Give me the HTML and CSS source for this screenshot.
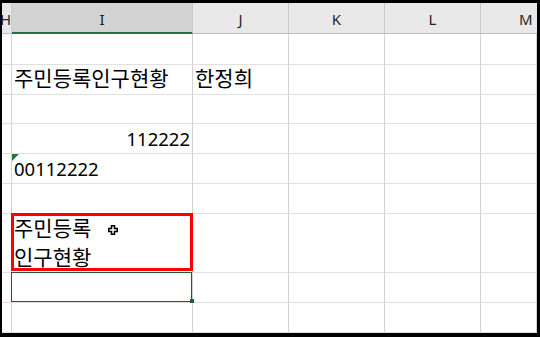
FILE: index.html
```html
<!DOCTYPE html>
<html lang="ko">
<head>
<meta charset="utf-8">
<title>Sheet</title>
<link rel="stylesheet" href="styles.css">
</head>
<body>
<div class="frame">
  <div class="sheet">
    <div class="hd stub">H</div>
    <div class="hd sel">I</div>
    <div class="hd">J</div>
    <div class="hd">K</div>
    <div class="hd">L</div>
    <div class="hd last">M</div>

    <div class="c"></div><div class="c"></div><div class="c"></div><div class="c"></div><div class="c"></div><div class="c"></div>

    <div class="c"></div>
    <div class="c ko">주민등록인구현황</div>
    <div class="c ko">한정희</div>
    <div class="c"></div><div class="c"></div><div class="c"></div>

    <div class="c"></div><div class="c"></div><div class="c"></div><div class="c"></div><div class="c"></div><div class="c"></div>

    <div class="c"></div>
    <div class="c num right">112222</div>
    <div class="c"></div><div class="c"></div><div class="c"></div><div class="c"></div>

    <div class="c"></div>
    <div class="c num flag">00112222</div>
    <div class="c"></div><div class="c"></div><div class="c"></div><div class="c"></div>

    <div class="c"></div><div class="c"></div><div class="c"></div><div class="c"></div><div class="c"></div><div class="c"></div>

    <div class="c"></div>
    <div class="c ko boxed">
      <div class="wrap">주민등록<br>인구현황</div>
      <svg class="cursor" width="10" height="10" viewBox="0 0 10 10"><path d="M3.5 .8h3v2.7h2.7v3h-2.7v2.7h-3v-2.7h-2.7v-3h2.7z" fill="#fff" stroke="#000" stroke-width="1.5"/></svg>
    </div>
    <div class="c"></div><div class="c"></div><div class="c"></div><div class="c"></div>

    <div class="c"></div>
    <div class="c active"><span class="handle"></span></div>
    <div class="c"></div><div class="c"></div><div class="c"></div><div class="c"></div>

    <div class="c"></div><div class="c"></div><div class="c"></div><div class="c"></div><div class="c"></div><div class="c"></div>
  </div>
</div>
</body>
</html>
```
FILE: styles.css
```css
html, body {
  margin: 0;
  padding: 0;
  background: #000;
}

.frame {
  width: 540px;
  height: 337px;
  box-sizing: border-box;
  padding: 3px 3px 4px 2px;
}

.sheet {
  width: 535px;
  height: 330px;
  display: grid;
  grid-template-columns: 10px 181px 96px 96px 96px 56px;
  grid-template-rows: 31px 31px 30px 29px 30px 30px 30px 59px 30px 30px;
  background: #fff;
  overflow: hidden;
}

.hd {
  box-sizing: border-box;
  background: #e9e9e9;
  border-right: 1px solid #c8c8c8;
  border-bottom: 1px solid #bdbdbd;
  font-family: "Noto Sans", sans-serif;
  font-size: 15px;
  line-height: 20px;
  padding-top: 6px;
  color: #262626;
  text-align: center;
  white-space: nowrap;
  overflow: hidden;
}

.hd.sel {
  background: #d3d3d3;
  border-bottom-color: #217346;
  box-shadow: inset 0 -1px 0 #217346;
  color: #1a1a1a;
}

.hd.stub {
  text-align: left;
  text-indent: -2px;
}

.hd.last {
  text-align: left;
  padding-left: 38px;
  border-right: none;
}

.c {
  box-sizing: border-box;
  border-right: 1px solid #d2d2d2;
  border-bottom: 1px solid #e0e0e0;
  white-space: nowrap;
  min-width: 0;
  color: #000;
}

.ko {
  font-family: "Noto Sans CJK KR", "Noto Sans", sans-serif;
  font-size: 21px;
  line-height: 24px;
  padding-left: 2px;
}

.num {
  font-family: "Noto Sans", sans-serif;
  font-size: 18.5px;
  line-height: 24px;
  padding: 3px 2px 0 2px;
}

.right {
  text-align: right;
}

.flag {
  position: relative;
}

.flag::before {
  content: "";
  position: absolute;
  left: 0;
  top: 0;
  width: 0;
  height: 0;
  border-top: 7px solid #1f7a3c;
  border-right: 7px solid transparent;
}

.boxed {
  position: relative;
}

.boxed::after {
  content: "";
  position: absolute;
  top: -1px;
  left: -1px;
  right: -1px;
  bottom: 1px;
  border: 3px solid #ff0000;
}

.wrap {
  line-height: 29px;
  margin-top: -1px;
}

.cursor {
  position: absolute;
  left: 96px;
  top: 11px;
}

.active {
  position: relative;
}

.active::after {
  content: "";
  position: absolute;
  top: -1px;
  left: -1px;
  right: 0;
  bottom: 0;
  border: 1px solid #1e5c38;
}

.handle {
  position: absolute;
  right: -2px;
  bottom: -1px;
  width: 4px;
  height: 4px;
  background: #1e5c38;
  z-index: 1;
}
```
